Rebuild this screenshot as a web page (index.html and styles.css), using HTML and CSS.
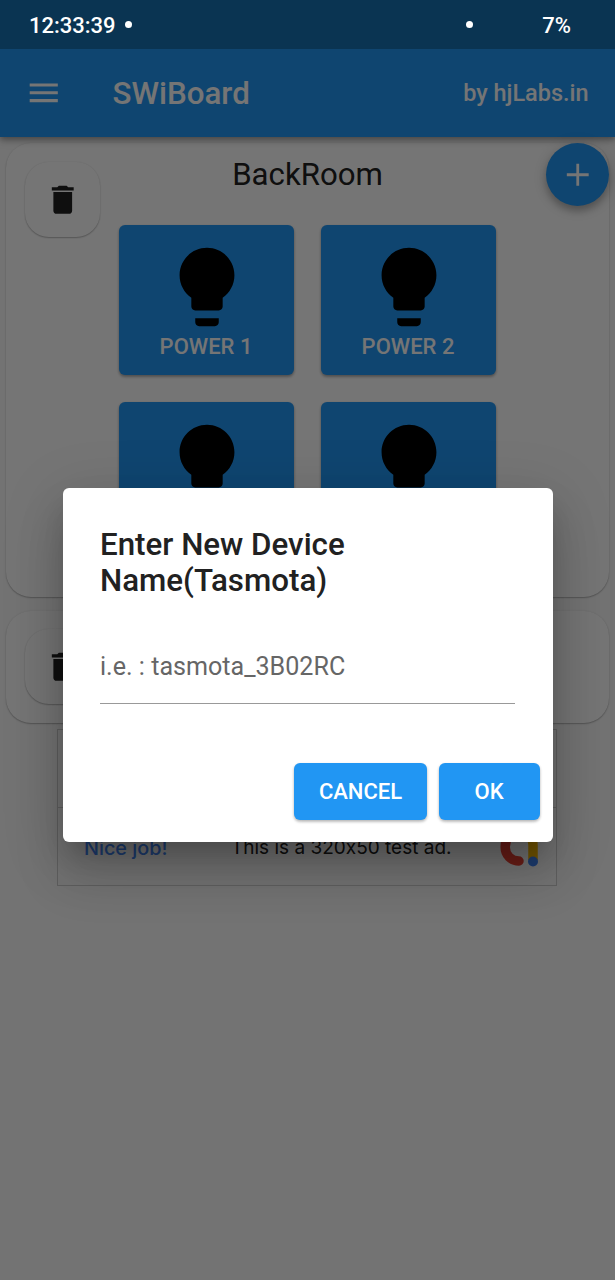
FILE: index.html
```html
<!DOCTYPE html>
<html lang="en">
<head>
<meta charset="utf-8">
<title>SWiBoard</title>
<link rel="stylesheet" href="styles.css">
</head>
<body>
<svg class="defs" aria-hidden="true">
  <symbol id="bulb" viewBox="0 0 24 24"><path d="M9 21c0 .55.45 1 1 1h4c.55 0 1-.45 1-1v-1H9v1zm3-19C8.14 2 5 5.14 5 9c0 2.38 1.19 4.47 3 5.74V17c0 .55.45 1 1 1h6c.55 0 1-.45 1-1v-2.26c1.81-1.27 3-3.36 3-5.74 0-3.86-3.14-7-7-7z"/></symbol>
  <symbol id="trash" viewBox="0 0 24 24"><path d="M6 19c0 1.100.9 2 2 2h8c1.100 0 2-.9 2-2V7H6v12zM19 4h-3.500l-1-1h-5l-1 1H5v2h14V4z"/></symbol>
</svg>
<div class="screen">
  <div class="status-space"></div>
  <header class="app-bar">
    <svg class="menu-icon" viewBox="0 0 24 24"><path d="M3 18h18v-2H3v2zm0-5h18v-2H3v2zm0-7v2h18V6H3z"/></svg>
    <h1 class="app-title">SWiBoard</h1>
    <span class="byline">by hjLabs.in</span>
  </header>
  <main class="content">
    <section class="card card-large">
      <button class="delete"><svg viewBox="0 0 24 24"><use href="#trash"/></svg></button>
      <div class="room">
        <h2 class="room-name">BackRoom</h2>
        <div class="tiles">
          <button class="tile"><svg><use href="#bulb"/></svg><span>POWER 1</span></button>
          <button class="tile"><svg><use href="#bulb"/></svg><span>POWER 2</span></button>
          <button class="tile"><svg><use href="#bulb"/></svg></button>
          <button class="tile"><svg><use href="#bulb"/></svg></button>
        </div>
      </div>
    </section>
    <section class="card card-small">
      <button class="delete"><svg viewBox="0 0 24 24"><use href="#trash"/></svg></button>
    </section>
    <aside class="ads">
      <div class="ad"></div>
      <div class="ad">
        <span class="ad-cta">Nice job!</span>
        <span class="ad-text">This is a 320x50 test ad.</span>
        <svg class="ad-logo" viewBox="0 0 40 44"><path d="M20 6C11 8 5.200 15 5.200 24C5.200 32 11 38 19 38" fill="none" stroke="#ea4335" stroke-width="9.500" stroke-linecap="round"/><path d="M20 6C28 6 33 13 33 22V37" fill="none" stroke="#fbbc04" stroke-width="9.500"/><circle cx="33" cy="38.500" r="5" fill="#4285f4"/></svg>
      </div>
    </aside>
  </main>
  <button class="fab"><svg viewBox="0 0 24 24"><path d="M19 12.900h-6.100v6.100h-1.800v-6.100H5v-1.800h6.100V5h1.800v6.100H19z"/></svg></button>
  <div class="scrim">
    <div class="dialog">
      <h3 class="dialog-title">Enter New Device Name(Tasmota)</h3>
      <div class="field">i.e. : tasmota_3B02RC</div>
      <div class="actions">
        <button class="action cancel">CANCEL</button>
        <button class="action ok">OK</button>
      </div>
    </div>
  </div>
  <div class="status-bar">
    <span class="clock">12:33:39</span><i class="dot"></i>
    <i class="dot dot-right"></i><span class="battery">7%</span>
  </div>
</div>
</body>
</html>
```

FILE: styles.css
```css
* { box-sizing: border-box; }
body { margin: 0; font-family: Roboto, "Liberation Sans", sans-serif; }
h1, h2, h3 { margin: 0; font-weight: 500; }
button { border: 0; padding: 0; margin: 0; font: inherit; color: inherit; }
.defs { position: absolute; width: 0; height: 0; }
.screen { position: relative; width: 615px; height: 1280px; overflow: hidden; background: #fafafa; display: flex; flex-direction: column; }
.status-space { height: 49px; flex: none; }
.app-bar { position: relative; z-index: 1; height: 88px; flex: none; display: flex; align-items: center; padding: 0 26.500px 0 25px; background: #2196f3; color: #fff; box-shadow: 0 2px 6px rgba(0,0,0,.32), 0 5px 8px rgba(0,0,0,.12); }
.menu-icon { width: 37.500px; height: 37.500px; fill: #fff; }
.app-title { margin-left: 50px; padding-top: 2px; font-size: 31.300px; line-height: 36px; }
.byline { margin-left: auto; font-size: 23.450px; font-weight: 500; }
.content { padding: 6px 6px 0; }
.card, .delete { background: #fff; box-shadow: 0 1px 1.500px rgba(0,0,0,.26), 0 0 2px rgba(0,0,0,.08); }
.card { position: relative; border-radius: 25px; }
.card-large { height: 454px; padding-top: 14px; }
.card-small { height: 112px; margin-top: 14px; }
.delete { position: absolute; left: 19px; top: 19px; width: 75px; height: 75px; border-radius: 24px; display: flex; align-items: center; justify-content: center; }
.card-small .delete { top: 18px; }
.delete svg { width: 37.500px; height: 37.500px; fill: #212121; }
.room { display: flex; flex-direction: column; align-items: center; }
.room-name { font-size: 31.200px; line-height: 36px; font-weight: 400; color: #212121; }
.tiles { display: grid; grid-template-columns: 175px 175px; gap: 27px; margin-top: 32px; }
.tile { height: 150px; border-radius: 6px; background: #2196f3; color: #fff; display: flex; flex-direction: column; align-items: center; padding-top: 15px; font-size: 22px; font-weight: 500; line-height: 26px; box-shadow: 0 2px 3px rgba(0,0,0,.26), 0 1px 3px rgba(0,0,0,.12); }
.tile svg { width: 94px; height: 94px; fill: #000; }
.tile span { margin-left: -1px; }
.ads { width: 500px; margin: 6px 0 0 51px; border: 1.500px solid #d0d0d0; }
.ad { height: 77px; display: flex; padding: 25px 0 0 26px; font-family: Inter, sans-serif; font-feature-settings: "calt" 0; line-height: 30px; }
.ad + .ad { height: 78px; border-top: 1.500px solid #d0d0d0; }
.ad-cta { width: 147px; font-size: 19.800px; font-weight: 500; color: #4285f4; }
.ad-text { width: 269px; font-size: 19px; color: #212121; }
.ad-logo { width: 40px; height: 44px; margin-top: -10px; }
.fab { position: absolute; z-index: 1; left: 546px; top: 143px; width: 63px; height: 63px; border-radius: 50%; background: #2196f3; display: flex; align-items: center; justify-content: center; box-shadow: 0 5px 7px rgba(0,0,0,.22), 0 3px 16px rgba(0,0,0,.16); }
.fab svg { width: 37.500px; height: 37.500px; fill: #fff; }
.scrim { position: absolute; z-index: 2; inset: 0; background: rgba(0,0,0,.54); display: flex; justify-content: center; align-items: flex-start; padding-top: 487.500px; }
.dialog { width: 490px; height: 354.500px; border-radius: 6px; background: #fff; padding: 39px 12.500px 0 37.500px; box-shadow: 0 17px 24px -8px rgba(0,0,0,.2), 0 34px 50px 2px rgba(0,0,0,.14), 0 12px 60px 8px rgba(0,0,0,.1); }
.dialog-title { width: 300px; font-size: 31.300px; line-height: 36px; color: #212121; }
.field { width: 415px; height: 66.500px; margin-top: 39px; padding-top: 14px; border-bottom: 1.500px solid #999; color: #666; font-size: 25.100px; line-height: 30px; }
.actions { display: flex; justify-content: flex-end; gap: 12px; margin-top: 58.500px; }
.action { height: 57px; border-radius: 6px; background: #2196f3; color: #fff; font-size: 22px; font-weight: 500; box-shadow: 0 2px 3px rgba(0,0,0,.2), 0 1px 3px rgba(0,0,0,.12); }
.cancel { width: 133px; }
.ok { width: 101px; padding-right: 1px; }
.status-bar { position: absolute; z-index: 3; left: 0; top: 0; width: 615px; height: 49px; padding: 1px 44px 0 29px; display: flex; align-items: center; background: #0a3452; color: #fff; font-size: 22px; font-weight: 500; }
.dot { width: 7px; height: 7px; margin: -1px 0 0 9px; border-radius: 50%; background: #fff; }
.dot-right { margin-left: auto; }
.battery { margin-left: 69px; }
```
